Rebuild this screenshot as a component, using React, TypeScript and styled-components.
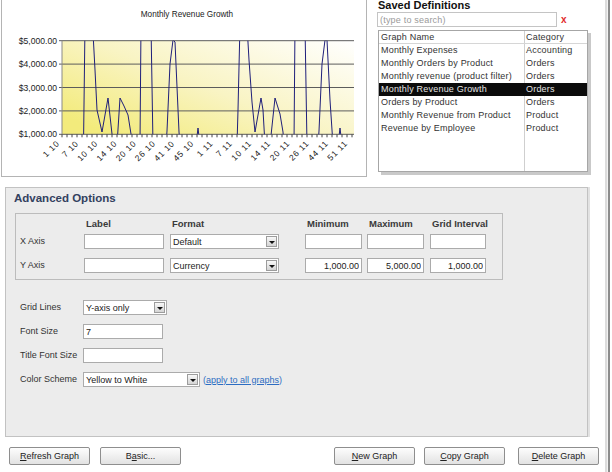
import React from 'react';
import styled, { createGlobalStyle } from 'styled-components';

const GlobalStyle = createGlobalStyle`
  html, body {
    margin: 0;
    padding: 0;
    background: #fff;
  }
  body {
    font-family: "Liberation Sans", Arial, sans-serif;
    font-size: 9px;
    color: #333;
  }
`;

const Screen = styled.div`
  display: flex;
  width: 612px;
  height: 472px;
  overflow: hidden;
  background: #fff;
`;

const Main = styled.div`
  width: 605px;
  display: flex;
  flex-direction: column;
`;

const WindowEdge = styled.div`
  width: 5px;
  background: linear-gradient(to right, #dcdcdc 0 2px, #f2f2f2 2px 3px, #8c8c8c 3px 5px);
`;

const TopRow = styled.div`
  display: flex;
  height: 187px;
`;

const ChartPanel = styled.div`
  margin-left: 1px;
  width: 364px;
  height: 176px;
  border: 1px solid #b4b4b4;
  border-top: none;
  background: #fff;

  svg {
    display: block;
  }
`;

const Definitions = styled.div`
  margin-left: 10px;
  width: 216px;
  display: flex;
  flex-direction: column;
`;

const SectionTitle = styled.div`
  height: 10px;
  line-height: 10px;
  font-size: 11px;
  font-weight: bold;
  color: #111;
  margin-left: 1px;
`;

const SearchRow = styled.div`
  display: flex;
  align-items: center;
  margin-top: 2px;
`;

const SearchInput = styled.input`
  box-sizing: border-box;
  width: 180px;
  height: 15px;
  border: 1px solid #c4c4c4;
  padding: 0 2px;
  font-family: inherit;
  font-size: 9px;
  letter-spacing: 0.2px;
  color: #333;
  outline: none;

  &::placeholder {
    color: #9a9a9a;
  }
`;

const ClearMark = styled.span`
  margin-left: 4px;
  color: #e22a2a;
  font-size: 10px;
  font-weight: bold;
`;

const ListBox = styled.div`
  box-sizing: border-box;
  margin: 3px 0 0 1px;
  width: 210px;
  height: 142px;
  border: 1px solid #a6a6a6;
  box-shadow: 3px 3px 0 #c9c9c9;
  background: linear-gradient(to right, #fff 145px, #cfcfcf 145px 146px, #fff 146px);
`;

const ListRow = styled.div<{ $selected?: boolean; $header?: boolean }>`
  display: grid;
  grid-template-columns: 146px 1fr;
  height: ${p => (p.$header ? '12px' : '13px')};
  line-height: ${p => (p.$header ? '12px' : '13px')};
  font-size: 9px;
  letter-spacing: 0.2px;
  white-space: nowrap;
  color: ${p => (p.$selected ? '#e4e4e4' : '#333')};
  background: ${p => (p.$selected ? '#0b0b0b' : 'transparent')};
  border-bottom: ${p => (p.$header ? '1px solid #d6d6d6' : 'none')};
`;

const ListCell = styled.span<{ $first?: boolean }>`
  padding-left: ${p => (p.$first ? '2px' : '1px')};
  overflow: hidden;
`;

const AdvancedPanel = styled.div`
  box-sizing: border-box;
  margin-left: 5px;
  width: 583px;
  height: 250px;
  border: 1px solid #c2c2c2;
  background: #ececec;
  padding: 0 9px;
  box-shadow: 2px 0 0 #e2e2e2;
`;

const PanelTitle = styled.div`
  margin: 3px 0 0 -1px;
  line-height: 14px;
  font-size: 11.5px;
  font-weight: bold;
  color: #33415f;
`;

const AxisBox = styled.div`
  box-sizing: border-box;
  margin-top: 8px;
  width: 488px;
  border: 1px solid #bcbcbc;
  padding: 4px 0 6px 4px;
`;

const AxisRow = styled.div<{ $top?: number }>`
  display: grid;
  grid-template-columns: 64px 86px 135px 62px 63px 56px;
  align-items: center;
  margin-top: ${p => p.$top ?? 0}px;
`;

const ColumnHead = styled.span`
  padding-left: 2px;
  line-height: 12px;
  font-size: 9.5px;
  font-weight: bold;
  color: #3a3a3a;
  white-space: nowrap;
`;

const FieldLabel = styled.span`
  line-height: 15px;
  font-size: 9px;
  color: #333;
  white-space: nowrap;
`;

const TextField = styled.input<{ $width: number; $align?: 'left' | 'right' }>`
  box-sizing: border-box;
  width: ${p => p.$width}px;
  height: 15px;
  border: 1px solid #ababab;
  background: #fff;
  padding: 0 2px;
  font-family: inherit;
  font-size: 9px;
  color: #222;
  text-align: ${p => p.$align ?? 'left'};
  outline: none;
`;

const SelectBox = styled.div<{ $width: number }>`
  box-sizing: border-box;
  display: flex;
  align-items: center;
  width: ${p => p.$width}px;
  height: 15px;
  border: 1px solid #ababab;
  background: #fff;
`;

const SelectValue = styled.span`
  flex: 1;
  padding-left: 2px;
  font-size: 9px;
  color: #222;
  white-space: nowrap;
`;

const DropButton = styled.span`
  box-sizing: border-box;
  display: flex;
  align-items: center;
  justify-content: center;
  width: 11px;
  height: 11px;
  margin-right: 1px;
  border: 1px solid #9c9c9c;
  background: linear-gradient(#f8f8f8, #d4d4d4);

  &::after {
    content: '';
    margin-top: 2px;
    border-left: 3px solid transparent;
    border-right: 3px solid transparent;
    border-top: 3px solid #111;
  }
`;

const LowerForm = styled.div`
  display: grid;
  grid-template-columns: 63px auto;
  grid-auto-rows: 15px;
  row-gap: 9px;
  align-items: center;
  margin-top: 20px;
  padding-left: 5px;
`;

const InlineGroup = styled.div`
  display: flex;
  align-items: center;
`;

const ApplyLink = styled.a`
  margin-left: 3px;
  font-size: 9px;
  color: #2d6dc2;
  text-decoration: underline;
  cursor: pointer;
`;

const ButtonBar = styled.div`
  display: flex;
  justify-content: space-between;
  margin-top: 10px;
  padding: 0 6px 0 9px;
`;

const ButtonGroup = styled.div`
  display: flex;
`;

const ActionButton = styled.button<{ $gap?: number }>`
  box-sizing: border-box;
  width: 81px;
  height: 18px;
  margin-left: ${p => p.$gap ?? 0}px;
  padding: 0;
  border: 1px solid #8e8e8e;
  border-radius: 2px;
  background: linear-gradient(#fdfdfd, #e2e2e2);
  font-family: inherit;
  font-size: 9px;
  color: #222;

  u {
    text-decoration: underline;
  }
`;

const PLOT = { left: 60, right: 352, top: 40.7, bottom: 134.3 };
const yLabels = ['$5,000.00', '$4,000.00', '$3,000.00', '$2,000.00', '$1,000.00'];
const xLabels = [
  '1 10', '7 10', '10 10', '14 10', '20 10', '26 10', '41 10', '45 10',
  '1 11', '7 11', '10 11', '14 11', '20 11', '26 11', '44 11', '51 11',
];

const series = [
  [60, 145], [81.5, 145], [83, 25], [90, 25], [91.5, 42], [93, 70], [95, 110], [100, 132],
  [106, 98], [110, 134], [111, 145], [115, 145], [118, 98], [122, 106], [126, 115],
  [129, 134], [130, 145], [138, 145], [139, 25], [149, 25], [151, 145], [164, 145],
  [165, 131], [168, 64], [171, 40], [173, 42], [177, 132], [178, 145], [194, 145],
  [196, 128], [198, 145], [235, 145], [236, 110], [238, 25], [245, 25], [247, 60],
  [250, 102], [253, 132], [259, 98], [261, 110], [263, 145], [268, 145], [273, 98],
  [278, 114], [281, 132], [282, 145], [292, 145], [293, 25], [303, 25], [305, 145],
  [316, 145], [317, 131], [320, 64], [323, 40], [325, 40], [328, 100], [330, 130],
  [331, 145], [336, 145], [338, 128], [340, 145], [352, 145],
];

const RevenueChart = () => {
  const { left, right, top, bottom } = PLOT;
  const step = (bottom - top) / 4;
  const ticks: number[] = [];
  for (let x = left; x <= right; x += 5) ticks.push(x);

  return (
    <svg width="364" height="176" viewBox="0 0 364 176" fontFamily="Liberation Sans, Arial, sans-serif">
      <defs>
        <linearGradient id="plotFill" x1="0" y1="0.8" x2="1" y2="0">
          <stop offset="0" stopColor="#f3eb7c" />
          <stop offset="0.45" stopColor="#f9f4c4" />
          <stop offset="1" stopColor="#ffffff" />
        </linearGradient>
        <clipPath id="plotClip">
          <rect x={left} y={top} width={right - left} height={bottom - top} />
        </clipPath>
      </defs>
      <text x="185" y="17" textAnchor="middle" fontSize="8.2" fill="#222">
        Monthly Revenue Growth
      </text>
      <rect x={left} y={top} width={right - left} height={bottom - top} fill="url(#plotFill)" />
      {yLabels.map((label, i) => (
        <g key={label}>
          <line x1={left - 3} x2={right} y1={top + i * step} y2={top + i * step} stroke="#5c5c5c" strokeWidth="1" />
          <text x="55" y={top + i * step + 3} textAnchor="end" fontSize="8.6" fill="#222">
            {label}
          </text>
        </g>
      ))}
      <line x1={left} x2={left} y1={top} y2={bottom} stroke="#8a8a8a" />
      {ticks.map(x => (
        <line key={x} x1={x} x2={x} y1={bottom} y2={bottom + 3} stroke="#444" />
      ))}
      <polyline
        clipPath="url(#plotClip)"
        points={series.map(p => p.join(',')).join(' ')}
        fill="none"
        stroke="#1f1f7a"
        strokeWidth="1"
      />
      {xLabels.map((label, i) => {
        const x = 58 + i * 19.2;
        return (
          <text
            key={label + i}
            x={x}
            y={144}
            textAnchor="end"
            fontSize="8.4"
            letterSpacing="0.8"
            fill="#222"
            transform={`rotate(-45 ${x} 144)`}
          >
            {label}
          </text>
        );
      })}
    </svg>
  );
};

const definitions = [
  { name: 'Monthly Expenses', category: 'Accounting' },
  { name: 'Monthly Orders by Product', category: 'Orders' },
  { name: 'Monthly revenue (product filter)', category: 'Orders' },
  { name: 'Monthly Revenue Growth', category: 'Orders', selected: true },
  { name: 'Orders by Product', category: 'Orders' },
  { name: 'Monthly Revenue from Product', category: 'Product' },
  { name: 'Revenue by Employee', category: 'Product' },
];

const Dropdown = ({ width, value }: { width: number; value: string }) => (
  <SelectBox $width={width}>
    <SelectValue>{value}</SelectValue>
    <DropButton />
  </SelectBox>
);

const App = () => (
  <>
    <GlobalStyle />
    <Screen>
      <Main>
        <TopRow>
          <ChartPanel>
            <RevenueChart />
          </ChartPanel>
          <Definitions>
            <SectionTitle>Saved Definitions</SectionTitle>
            <SearchRow>
              <SearchInput placeholder="(type to search)" />
              <ClearMark>x</ClearMark>
            </SearchRow>
            <ListBox>
              <ListRow $header>
                <ListCell $first>Graph Name</ListCell>
                <ListCell>Category</ListCell>
              </ListRow>
              {definitions.map(d => (
                <ListRow key={d.name} $selected={d.selected}>
                  <ListCell $first>{d.name}</ListCell>
                  <ListCell>{d.category}</ListCell>
                </ListRow>
              ))}
            </ListBox>
          </Definitions>
        </TopRow>

        <AdvancedPanel>
          <PanelTitle>Advanced Options</PanelTitle>
          <AxisBox>
            <AxisRow>
              <span />
              <ColumnHead>Label</ColumnHead>
              <ColumnHead>Format</ColumnHead>
              <ColumnHead>Minimum</ColumnHead>
              <ColumnHead>Maximum</ColumnHead>
              <ColumnHead>Grid Interval</ColumnHead>
            </AxisRow>
            <AxisRow $top={4}>
              <FieldLabel>X Axis</FieldLabel>
              <TextField $width={80} />
              <Dropdown width={109} value="Default" />
              <TextField $width={57} $align="right" />
              <TextField $width={57} $align="right" />
              <TextField $width={56} $align="right" />
            </AxisRow>
            <AxisRow $top={9}>
              <FieldLabel>Y Axis</FieldLabel>
              <TextField $width={80} />
              <Dropdown width={109} value="Currency" />
              <TextField $width={57} $align="right" defaultValue="1,000.00" />
              <TextField $width={57} $align="right" defaultValue="5,000.00" />
              <TextField $width={56} $align="right" defaultValue="1,000.00" />
            </AxisRow>
          </AxisBox>

          <LowerForm>
            <FieldLabel>Grid Lines</FieldLabel>
            <Dropdown width={84} value="Y-axis only" />
            <FieldLabel>Font Size</FieldLabel>
            <TextField $width={80} defaultValue="7" />
            <FieldLabel>Title Font Size</FieldLabel>
            <TextField $width={80} />
            <FieldLabel>Color Scheme</FieldLabel>
            <InlineGroup>
              <Dropdown width={117} value="Yellow to White" />
              <ApplyLink>(apply to all graphs)</ApplyLink>
            </InlineGroup>
          </LowerForm>
        </AdvancedPanel>

        <ButtonBar>
          <ButtonGroup>
            <ActionButton><u>R</u>efresh Graph</ActionButton>
            <ActionButton $gap={10}>B<u>a</u>sic...</ActionButton>
          </ButtonGroup>
          <ButtonGroup>
            <ActionButton><u>N</u>ew Graph</ActionButton>
            <ActionButton $gap={9}><u>C</u>opy Graph</ActionButton>
            <ActionButton $gap={13}><u>D</u>elete Graph</ActionButton>
          </ButtonGroup>
        </ButtonBar>
      </Main>
      <WindowEdge />
    </Screen>
  </>
);

export default App;
